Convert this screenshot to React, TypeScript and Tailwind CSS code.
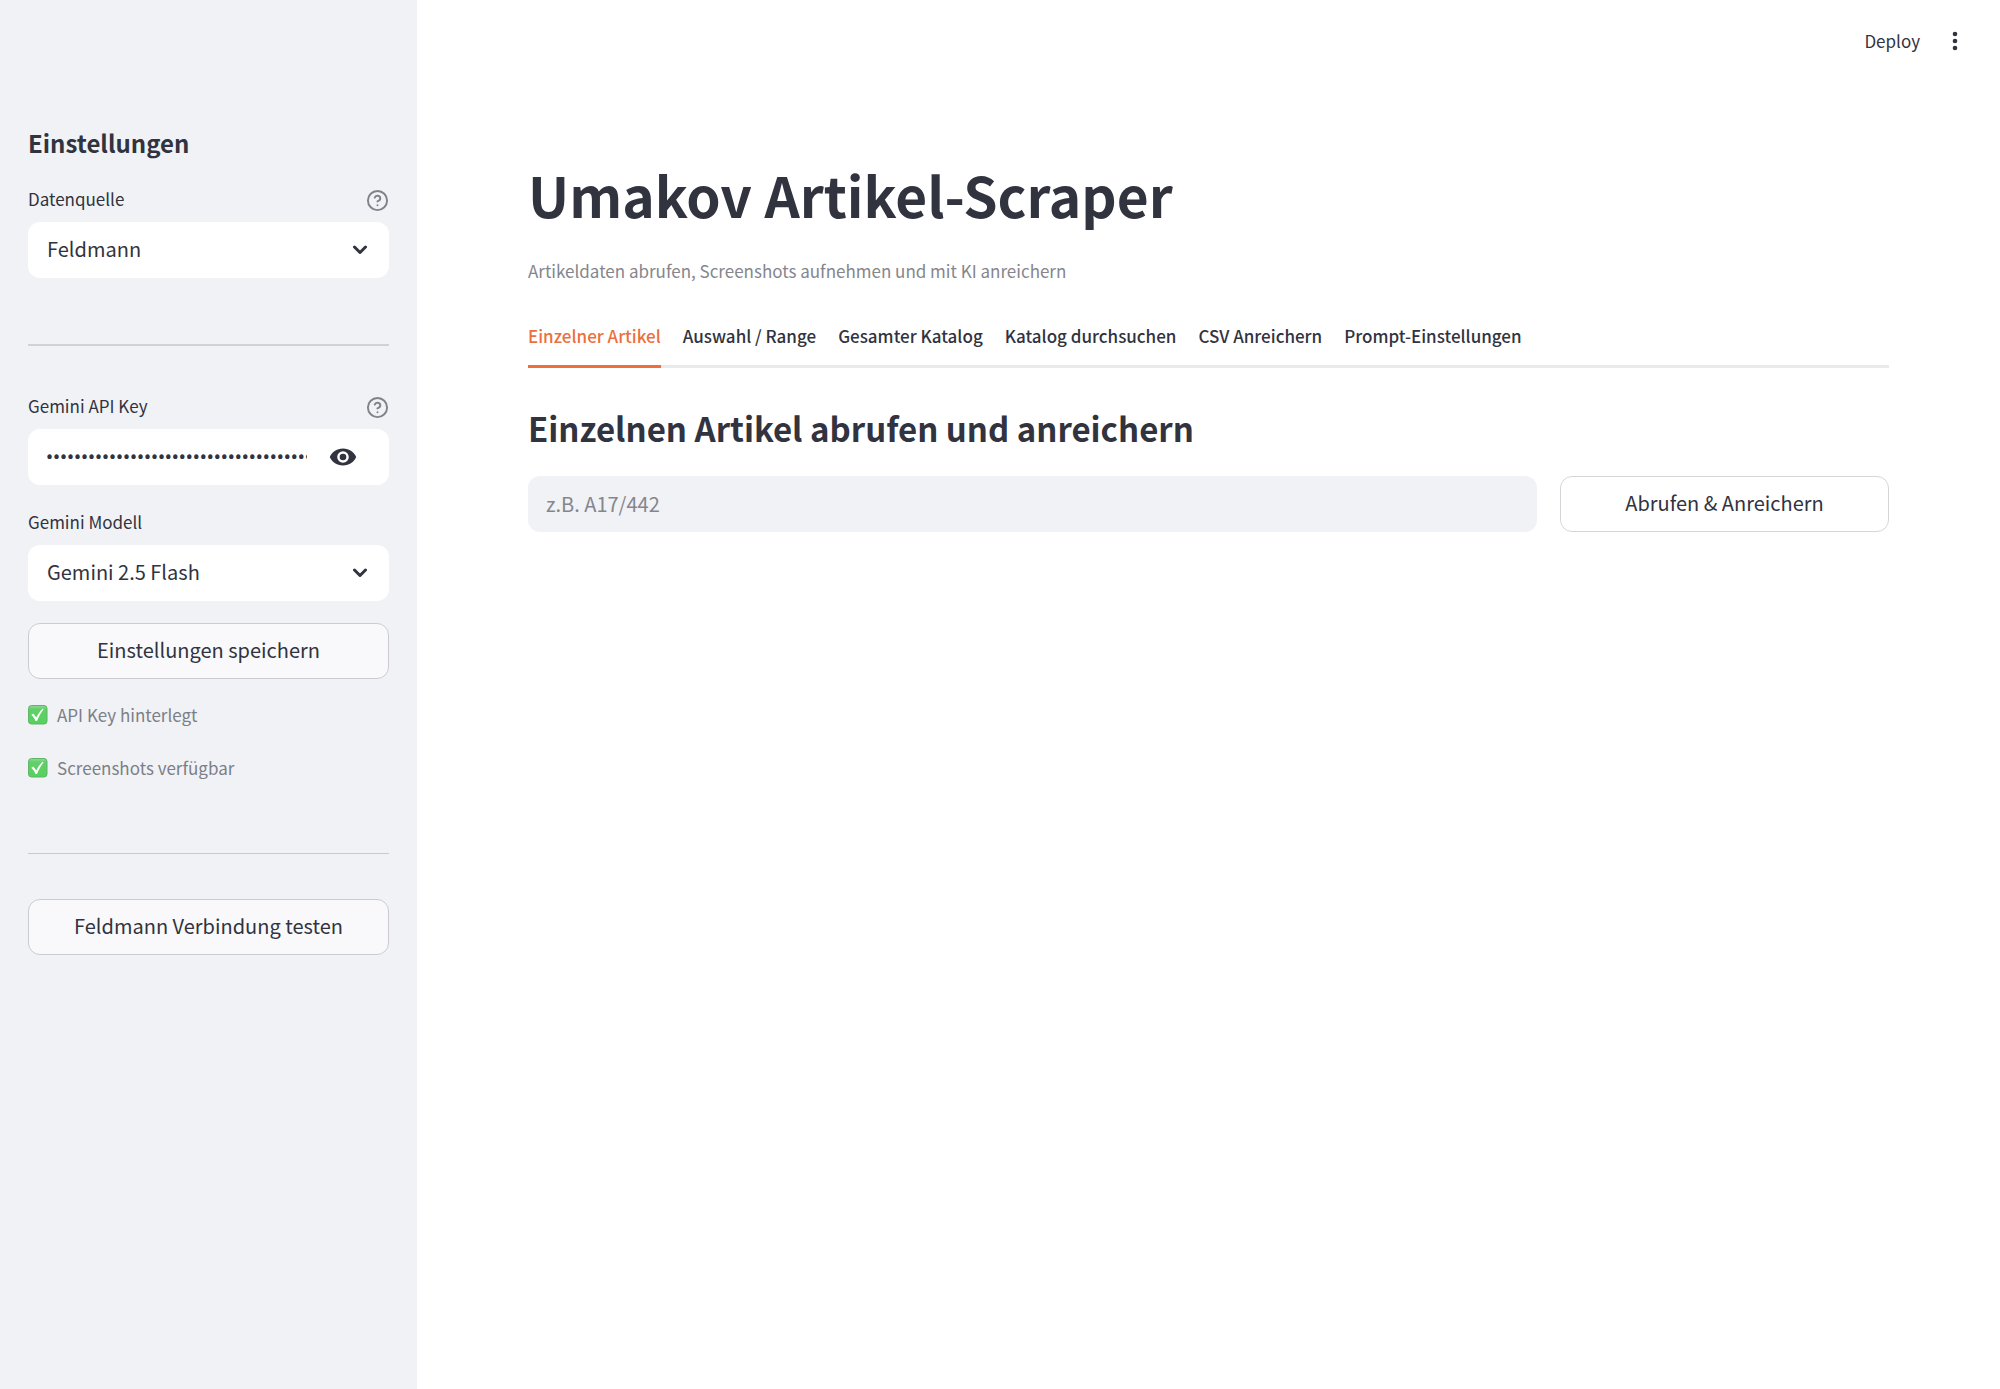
import { useState } from "react";
import type { ReactNode } from "react";

const tabs = [
  "Einzelner Artikel",
  "Auswahl / Range",
  "Gesamter Katalog",
  "Katalog durchsuchen",
  "CSV Anreichern",
  "Prompt-Einstellungen",
];

function HelpIcon() {
  return (
    <svg viewBox="0 0 24 24" className="size-[23px]" fill="none" stroke="currentColor" strokeWidth="2" strokeLinecap="round" strokeLinejoin="round" aria-hidden="true">
      <circle cx="12" cy="12" r="10" />
      <path d="M9.09 9a3 3 0 0 1 5.83 1c0 2-3 3-3 3" />
      <path d="M12 17h.01" />
    </svg>
  );
}

function HelpButton({ label }: { label: string }) {
  return (
    <button type="button" aria-label={label} className="text-[#808289]">
      <HelpIcon />
    </button>
  );
}

function EyeIcon() {
  return (
    <svg viewBox="0 0 28 28" className="size-7" fill="currentColor" aria-hidden="true">
      <path fillRule="evenodd" d="M14 5.500C7.500 5.500 2.700 9.500.8 14c1.900 4.500 6.700 8.500 13.200 8.500S25.300 18.500 27.200 14C25.300 9.500 20.500 5.500 14 5.500zM14 8.200a5.800 5.800 0 1 1 0 11.600a5.800 5.800 0 0 1 0-11.600z" />
      <circle cx="14" cy="14" r="3.300" />
    </svg>
  );
}

function CheckBadge() {
  return (
    <svg viewBox="0 0 20 20" className="size-5 shrink-0" aria-hidden="true">
      <defs>
        <linearGradient id="badge" x1="0" y1="0" x2="0" y2="1">
          <stop offset="0" stopColor="#8fdc95" />
          <stop offset="0.2" stopColor="#62cf69" />
          <stop offset="1" stopColor="#55d25c" />
        </linearGradient>
      </defs>
      <rect x="0.5" y="0.5" width="18.500" height="18.500" rx="3" fill="url(#badge)" stroke="#5fb568" />
      <path d="M3.300 9.800 5.400 8.600l2.900 4C9.900 9.500 11.700 6.400 14.600 3.800l1 .5C12.800 7.800 11 11.500 9 15.900H7.600C6.500 13.500 5.100 11.600 3.300 9.800z" fill="#fff" />
    </svg>
  );
}

function Select({ id, options }: { id: string; options: string[] }) {
  return (
    <div className="relative">
      <select id={id} className="h-14 w-full appearance-none rounded-xl bg-white pr-14 pb-[2px] pl-[19px] text-xl">
        {options.map((option) => (
          <option key={option}>{option}</option>
        ))}
      </select>
      <svg viewBox="0 0 16 10" className="pointer-events-none absolute top-[23px] right-[21px] h-[10px] w-4" fill="none" stroke="currentColor" strokeWidth="3" strokeLinecap="round" strokeLinejoin="round" aria-hidden="true">
        <path d="M2.500 2 8 7.500 13.500 2" />
      </svg>
    </div>
  );
}

function SidebarButton({ children }: { children: ReactNode }) {
  return (
    <button type="button" className="h-14 w-full rounded-xl border border-[#cbccd1] bg-[#f9f9fb] pb-[2px] text-xl">
      {children}
    </button>
  );
}

function Status({ children }: { children: ReactNode }) {
  return (
    <p className="flex items-center gap-[9px] text-[17px] leading-7 text-[#7d7f86]">
      <CheckBadge />
      {children}
    </p>
  );
}

export default function App() {
  const [active, setActive] = useState(tabs[0]);
  return (
    <div className="flex min-h-screen bg-white font-['Noto_Sans_CJK_SC',sans-serif] text-[#31333f]">
      <aside className="w-[417px] shrink-0 bg-[#f0f2f6] px-7 pt-[123px]">
        <h2 className="text-2xl leading-10 font-bold">Einstellungen</h2>
        <div className="mt-[22px] mb-[7px] flex h-[30px] items-center justify-between">
          <label htmlFor="source" className="pb-[2px] text-[17px]">Datenquelle</label>
          <HelpButton label="Hilfe zur Datenquelle" />
        </div>
        <Select id="source" options={["Feldmann"]} />
        <hr className="mt-[66px] border-t-2 border-[#d0d2d7]" />

        <div className="mt-[46px] mb-[7px] flex h-[30px] items-center justify-between">
          <label htmlFor="key" className="pb-[2px] text-[17px]">Gemini API Key</label>
          <HelpButton label="Hilfe zum API Key" />
        </div>
        <div className="flex h-14 items-center rounded-xl bg-white pr-8 pl-[18px]">
          <input id="key" type="password" defaultValue="00000000000000000000000000000000000000000000" className="min-w-0 flex-1 bg-transparent font-['Roboto',sans-serif] text-xl font-medium outline-none" />
          <button type="button" aria-label="API Key anzeigen" className="ml-[22px]">
            <EyeIcon />
          </button>
        </div>

        <div className="mt-[23px] mb-[7px] flex h-[30px] items-center">
          <label htmlFor="model" className="pb-[2px] text-[17px]">Gemini Modell</label>
        </div>
        <Select id="model" options={["Gemini 2.5 Flash"]} />
        <div className="mt-[22px]">
          <SidebarButton>Einstellungen speichern</SidebarButton>
        </div>
        <div className="mt-[22px] flex flex-col gap-[25px]">
          <Status>API Key hinterlegt</Status>
          <Status>Screenshots verfügbar</Status>
        </div>
        <hr className="mt-[71px] border-[#c8cad0]" />
        <div className="mt-[45px]">
          <SidebarButton>Feldmann Verbindung testen</SidebarButton>
        </div>
      </aside>

      <div className="min-w-0 flex-1">
        <header className="flex h-[82px] items-center justify-end gap-[22px] pr-8">
          <button type="button" className="text-[17px]">Deploy</button>
          <button type="button" aria-label="Menü" className="flex h-7 w-[26px] items-center justify-center">
            <svg viewBox="0 0 6 20" className="h-5 w-[6px]" fill="currentColor" aria-hidden="true">
              <circle cx="3" cy="3" r="2.300" />
              <circle cx="3" cy="10" r="2.300" />
              <circle cx="3" cy="17" r="2.300" />
            </svg>
          </button>
        </header>
        <main className="px-[111px] pt-[72px]">
          <h1 className="text-[55px] leading-[80px] font-bold">Umakov Artikel-Scraper</h1>
          <p className="mt-[23px] text-[17px] leading-7 text-[#85868d]">
            Artikeldaten abrufen, Screenshots aufnehmen und mit KI anreichern
          </p>
          <div role="tablist" className="mt-[22px] flex gap-[22px] border-b-3 border-[#e9eaec]">
            {tabs.map((tab) => (
              <button
                key={tab}
                type="button"
                role="tab"
                aria-selected={tab === active}
                onClick={() => setActive(tab)}
                className={
                  tab === active
                    ? "-mb-[3px] h-[61px] border-b-3 border-[#ed6f3d] pb-px text-[17px] font-medium whitespace-nowrap text-[#ed6f3d]"
                    : "-mb-[3px] h-[61px] border-b-3 border-transparent pb-px text-[17px] font-medium whitespace-nowrap"
                }
              >
                {tab}
              </button>
            ))}
          </div>
          <h2 className="mt-[34px] text-[33px] leading-[52px] font-bold">Einzelnen Artikel abrufen und anreichern</h2>
          <form className="mt-[22px] flex gap-[23px]" onSubmit={(event) => event.preventDefault()}>
            <input aria-label="Artikelnummer" placeholder="z.B. A17/442" className="h-14 min-w-0 flex-1 rounded-xl bg-[#f0f2f6] px-[18px] pb-[2px] text-xl placeholder:text-[#85868d]" />
            <button type="submit" className="h-14 w-[329px] rounded-xl border border-[#d6d6d9] bg-white pb-[2px] text-xl">
              Abrufen &amp; Anreichern
            </button>
          </form>
        </main>
      </div>
    </div>
  );
}
